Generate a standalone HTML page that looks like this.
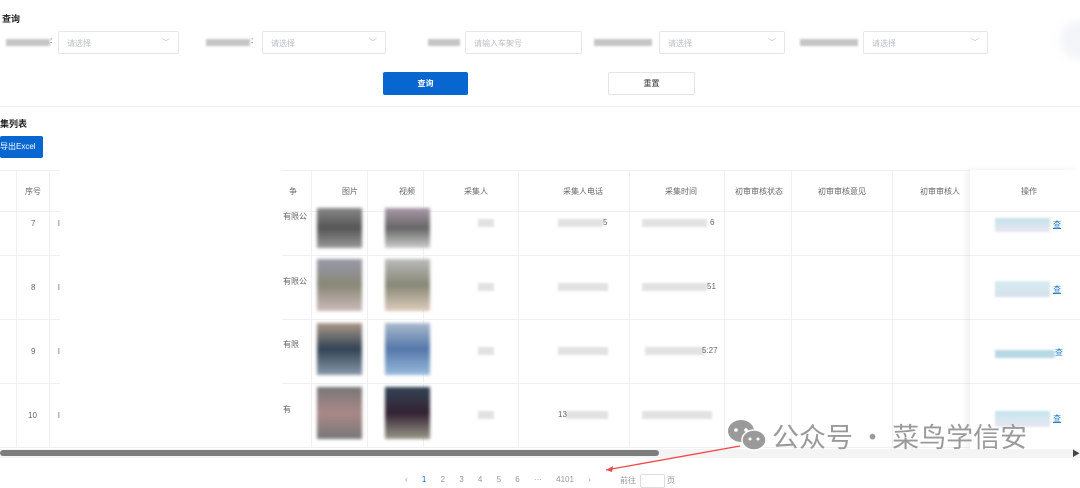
<!DOCTYPE html>
<html><head><meta charset="utf-8"><style>
*{margin:0;padding:0;box-sizing:border-box}
body{width:1080px;height:479px;overflow:hidden;background:#fff;font-family:"Liberation Sans","Noto Sans CJK SC",sans-serif;font-size:8px;color:#666;position:relative}
.a{position:absolute}
.t{font-weight:bold;color:#222;font-size:9px}
.sel{position:absolute;height:23px;border:1px solid #e4e6ea;border-radius:2px;color:#b8bcc4;font-size:8px;padding:6px 8px}
.sel .ar{position:absolute;right:8px;top:5px;color:#bbb;font-size:8px}
.bl{position:absolute;height:7px;background:#c5c5c5;filter:blur(1px)}
.vl{position:absolute;top:170px;height:277px;width:1px;background:#eef0f4}
.hl{position:absolute;left:0;width:1080px;height:1px;background:#eef0f4}
.h{position:absolute;top:186px;font-size:8px;color:#666}
.img{position:absolute;width:45px;height:52px;filter:blur(1.5px)}
.g{position:absolute;height:8px;background:#e2e2e2;filter:blur(1px)}
</style></head><body>
<div class="a t" style="left:2px;top:12px">查询</div>
<div class="bl" style="left:6px;top:39px;width:44px"></div><div class="a" style="left:50px;top:36px;color:#333">:</div>
<div class="sel" style="left:58px;top:31px;width:121px">请选择<span class="ar">﹀</span></div>
<div class="bl" style="left:206px;top:39px;width:44px"></div><div class="a" style="left:251px;top:36px;color:#333">:</div>
<div class="sel" style="left:262px;top:31px;width:124px">请选择<span class="ar">﹀</span></div>
<div class="bl" style="left:428px;top:39px;width:32px"></div>
<div class="sel" style="left:465px;top:31px;width:117px">请输入车架号</div>
<div class="bl" style="left:594px;top:39px;width:58px"></div>
<div class="sel" style="left:659px;top:31px;width:126px">请选择<span class="ar">﹀</span></div>
<div class="bl" style="left:800px;top:39px;width:58px"></div>
<div class="sel" style="left:863px;top:31px;width:125px">请选择<span class="ar">﹀</span></div>
<div class="a" style="left:1060px;top:20px;width:40px;height:40px;border-radius:50%;background:#f3f5f8;filter:blur(4px)"></div>
<div class="a" style="left:383px;top:72px;width:85px;height:23px;background:#0866d0;border-radius:2px;color:#fff;text-align:center;line-height:23px;font-weight:bold">查询</div>
<div class="a" style="left:608px;top:72px;width:87px;height:23px;border:1px solid #e2e4e8;border-radius:2px;color:#333;text-align:center;line-height:21px">重置</div>
<div class="a" style="left:0;top:106px;width:1080px;height:1px;background:#eceef2"></div>
<div class="a t" style="left:0;top:117px">集列表</div>
<div class="a" style="left:0;top:136px;width:43px;height:22px;background:#0866d0;border-radius:2px;color:#fff;line-height:22px;font-size:8px">导出Excel</div>

<div class="hl" style="top:170px"></div><div class="hl" style="top:211px"></div><div class="hl" style="top:255px"></div><div class="hl" style="top:319px"></div><div class="hl" style="top:383px"></div><div class="hl" style="top:447px"></div>
<div class="vl" style="left:16px"></div><div class="vl" style="left:49px"></div><div class="vl" style="left:311px"></div><div class="vl" style="left:367px"></div><div class="vl" style="left:423px"></div><div class="vl" style="left:518px"></div><div class="vl" style="left:629px"></div><div class="vl" style="left:724px"></div><div class="vl" style="left:791px"></div><div class="vl" style="left:892px"></div>
<div class="a" style="left:60px;top:170px;width:222px;height:277px;background:#fff"></div>
<div class="h" style="left:25px">序号</div><div class="h" style="left:289px">争</div><div class="h" style="left:342px">图片</div><div class="h" style="left:399px">视频</div><div class="h" style="left:464px">采集人</div><div class="h" style="left:563px">采集人电话</div><div class="h" style="left:665px">采集时间</div><div class="h" style="left:735px">初审审核状态</div><div class="h" style="left:818px">初审审核意见</div><div class="h" style="left:920px">初审审核人</div>

<div class="a" style="left:31px;top:219px">7</div><div class="a" style="left:31px;top:283px">8</div><div class="a" style="left:31px;top:347px">9</div><div class="a" style="left:28px;top:411px">10</div>
<div class="a" style="left:58px;top:219px">l</div><div class="a" style="left:58px;top:283px">l</div><div class="a" style="left:58px;top:347px">l</div><div class="a" style="left:58px;top:411px">l</div>
<div class="a" style="left:283px;top:211px">有限公</div><div class="a" style="left:283px;top:276px">有限公</div><div class="a" style="left:283px;top:339px">有限</div><div class="a" style="left:283px;top:404px">有</div>

<div class="img" style="left:317px;top:208px;height:40px;background:linear-gradient(#888,#555 50%,#999)"></div>
<div class="img" style="left:385px;top:208px;height:40px;background:linear-gradient(#a9a,#666 50%,#ccc)"></div>
<div class="img" style="left:317px;top:259px;background:linear-gradient(#99a,#887 50%,#cbb)"></div>
<div class="img" style="left:385px;top:259px;background:linear-gradient(#bbb,#887 50%,#dcb)"></div>
<div class="img" style="left:317px;top:323px;background:linear-gradient(#a98,#345 50%,#89a)"></div>
<div class="img" style="left:385px;top:323px;background:linear-gradient(#abc,#57a 50%,#9bd)"></div>
<div class="img" style="left:317px;top:387px;background:linear-gradient(#777,#a88 50%,#777)"></div>
<div class="img" style="left:385px;top:387px;background:linear-gradient(#345,#323 50%,#998)"></div>

<div class="g" style="left:478px;top:219px;width:16px"></div><div class="g" style="left:478px;top:283px;width:16px"></div><div class="g" style="left:478px;top:347px;width:16px"></div><div class="g" style="left:478px;top:411px;width:16px"></div>
<div class="g" style="left:558px;top:219px;width:45px"></div><div class="a" style="left:603px;top:218px">5</div>
<div class="g" style="left:558px;top:283px;width:50px"></div><div class="g" style="left:558px;top:347px;width:50px"></div>
<div class="g" style="left:566px;top:411px;width:42px"></div><div class="a" style="left:558px;top:410px">13</div>
<div class="g" style="left:642px;top:219px;width:65px"></div><div class="a" style="left:710px;top:218px">6</div>
<div class="g" style="left:642px;top:283px;width:65px"></div><div class="a" style="left:707px;top:282px">51</div>
<div class="g" style="left:645px;top:347px;width:60px"></div><div class="a" style="left:702px;top:346px">5:27</div>
<div class="g" style="left:642px;top:411px;width:70px"></div>

<div class="a" style="left:970px;top:170px;width:110px;height:280px;background:#fff;box-shadow:-4px 0 6px rgba(0,0,0,.06)"></div>
<div class="a" style="left:970px;top:211px;width:110px;height:1px;background:#eef0f4"></div>
<div class="a" style="left:970px;top:255px;width:110px;height:1px;background:#eef0f4"></div>
<div class="a" style="left:970px;top:319px;width:110px;height:1px;background:#eef0f4"></div>
<div class="a" style="left:970px;top:383px;width:110px;height:1px;background:#eef0f4"></div>
<div class="a" style="left:1021px;top:186px">操作</div>
<div class="a" style="left:995px;top:218px;width:55px;height:14px;background:linear-gradient(#c4e4ea,#e8e6f2);filter:blur(1px)"></div><div class="a" style="left:1053px;top:219px;color:#2a7fc9;text-decoration:underline">查</div>
<div class="a" style="left:995px;top:281px;width:55px;height:16px;background:linear-gradient(#d5ecf0,#d6e0ec);filter:blur(1px)"></div><div class="a" style="left:1053px;top:284px;color:#2a7fc9;text-decoration:underline">查</div>
<div class="a" style="left:995px;top:350px;width:60px;height:8px;background:#b8d8e4;filter:blur(1px)"></div><div class="a" style="left:1055px;top:347px;color:#2a7fc9">查</div>
<div class="a" style="left:995px;top:411px;width:55px;height:16px;background:linear-gradient(#c4e6ec,#e8e6f2);filter:blur(1px)"></div><div class="a" style="left:1053px;top:413px;color:#2a7fc9;text-decoration:underline">查</div>

<div class="a" style="left:0;top:449px;width:1080px;height:9px;background:#f4f4f4"></div>
<div class="a" style="left:0;top:450px;width:659px;height:6px;background:#7d7d7d;border-radius:3px"></div>
<div class="a" style="left:1072px;top:448px;color:#444;font-size:8px">▶</div>

<div class="a" style="left:405px;top:475px;font-size:8px;color:#999;word-spacing:12px">‹ <span style="color:#0866d0">1</span> 2 3 4 5 6 ··· 4101 ›</div>
<div class="a" style="left:620px;top:475px;color:#999">前往</div><div class="a" style="left:640px;top:474px;width:25px;height:14px;border:1px solid #ddd;border-radius:2px"></div><div class="a" style="left:667px;top:475px;color:#999">页</div>

<svg class="a" style="left:0;top:0" width="1080" height="479"><line x1="740" y1="446" x2="606" y2="470" stroke="#f04848" stroke-width="1.3"/><path d="M606 470 L613 466 L612 472Z" fill="#f04848"/></svg>
<svg class="a" style="left:727px;top:418px" width="42" height="36"><ellipse cx="14" cy="13" rx="13" ry="11" fill="#9a9a9a"/><circle cx="9" cy="12" r="1.8" fill="#fff"/><circle cx="19" cy="12" r="1.8" fill="#fff"/><ellipse cx="27" cy="22" rx="12" ry="10" fill="#9a9a9a" stroke="#fff" stroke-width="1.5"/><circle cx="23" cy="21" r="1.5" fill="#fff"/><circle cx="31" cy="21" r="1.5" fill="#fff"/></svg>
<div class="a" style="left:772px;top:420px;font-size:27px;color:#9a9a9a;letter-spacing:0px;font-family:'Noto Sans CJK SC',sans-serif;line-height:32px">公众号 · 菜鸟学信安</div>
</body></html>
